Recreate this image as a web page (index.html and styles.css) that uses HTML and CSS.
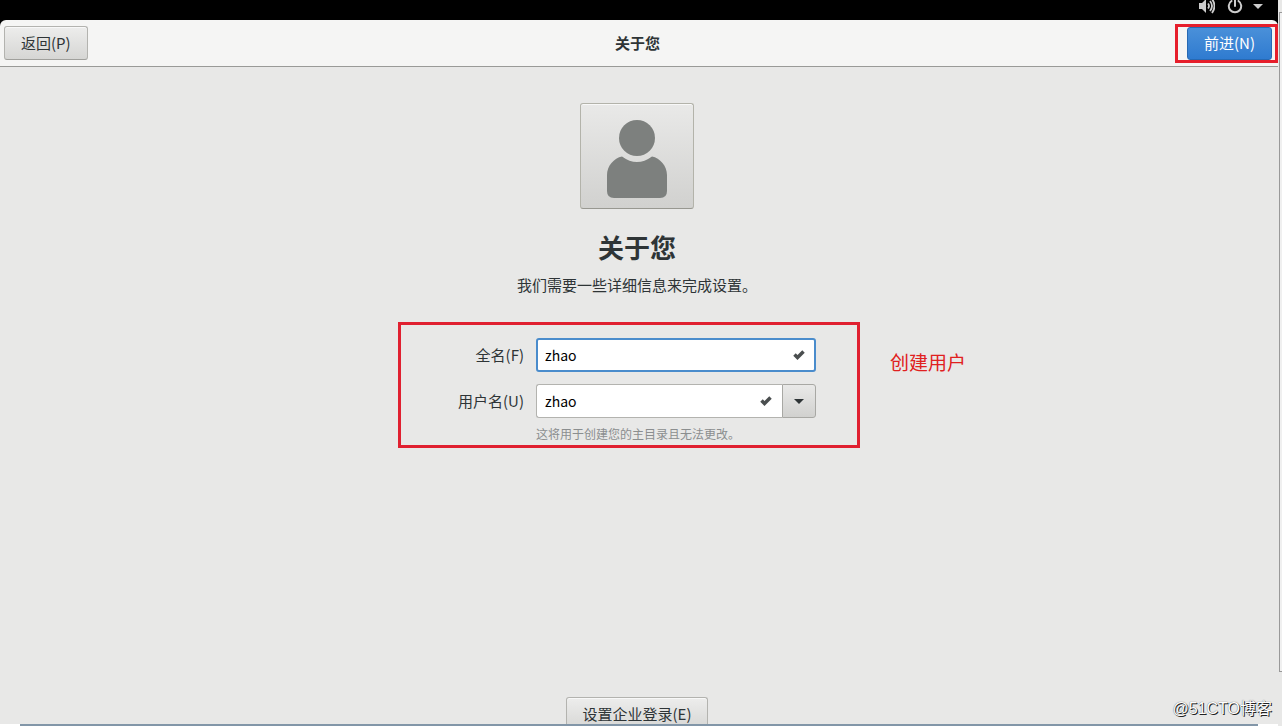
FILE: index.html
```html
<!DOCTYPE html>
<html lang="zh-CN">
<head>
  <meta charset="UTF-8">
  <meta name="viewport" content="width=device-width, initial-scale=1.0">
  <title>关于您</title>
  <link rel="stylesheet" href="styles.css">
</head>
<body>

<div class="screen">
  <div class="topbar">
    <svg class="volume" width="16" height="16" viewBox="0 0 16 16">
      <path d="M0 5h3l4-4v14l-4-4H0z" fill="#ccc"/>
      <path d="M9 5.500q2 2.500 0 5M11 3q4 5 0 10M13 1q5 7 0 14" fill="none" stroke="#ccc" stroke-width="1.800"/>
    </svg>
    <svg class="power" width="16" height="16" viewBox="0 0 16 16">
      <path d="M4.500 3a6.200 6.200 0 1 0 7 0M8 0v8" fill="none" stroke="#ccc" stroke-width="2" stroke-linecap="round"/>
    </svg>
    <svg class="caret" width="10" height="16" viewBox="0 0 10 16">
      <path d="M0 6h10l-5 5z" fill="#ccc"/>
    </svg>
  </div>

  <header class="header">
    <button class="btn" type="button">返回(P)</button>
    <h1 class="header-title">关于您</h1>
    <div class="next">
      <button class="btn btn-primary" type="button">前进(N)</button>
    </div>
  </header>

  <main class="page">
    <button class="avatar" type="button" aria-label="头像">
      <svg width="60" height="78" viewBox="0 0 60 78" fill="#7d807e">
        <circle cx="30" cy="18" r="18"/>
        <path d="M15 36.500Q30 47.500 45 36.500C53 38 60 46 60 55V71Q60 78 53 78H7Q0 78 0 71V55C0 46 7 38 15 36.500z"/>
      </svg>
    </button>
    <h2 class="title">关于您</h2>
    <p class="subtitle">我们需要一些详细信息来完成设置。</p>

    <form class="form">
      <label for="fullname">全名(F)</label>
      <div class="entry entry-focus">
        <input type="text" id="fullname" value="zhao">
        <svg class="check" width="12" height="10" viewBox="0 0 12 10">
          <path d="M1.500 4.500l3 3 6-6" fill="none" stroke="#4a4e4f" stroke-width="3.500"/>
        </svg>
      </div>

      <label for="username">用户名(U)</label>
      <div class="combo">
        <div class="entry">
          <input type="text" id="username" value="zhao">
          <svg class="check" width="12" height="10" viewBox="0 0 12 10">
            <path d="M1.500 4.500l3 3 6-6" fill="none" stroke="#4a4e4f" stroke-width="3.500"/>
          </svg>
        </div>
        <button class="combo-btn" type="button" aria-label="选择用户名">
          <svg width="10" height="5" viewBox="0 0 10 5"><path d="M0 0h10l-5 5z" fill="#2e3436"/></svg>
        </button>
      </div>

      <p class="hint">这将用于创建您的主目录且无法更改。</p>
      <div class="mark"></div>
      <span class="note">创建用户</span>
    </form>

    <button class="btn enterprise" type="button">设置企业登录(E)</button>
  </main>
  <div class="bottom-line"></div>
</div>
<div class="gutter"></div>
<div class="watermark">@51CTO博客</div>

</body>
</html>
```
FILE: styles.css
```css
* {
  box-sizing: border-box;
}

body {
  margin: 0;
  display: flex;
  height: 100vh;
  overflow: hidden;
  position: relative;
  font-family: "Noto Sans CJK SC", sans-serif;
  font-size: 15px;
  line-height: 22px;
  color: #2e3436;
  background-color: #e8e8e7;
}

button,
input {
  font: inherit;
  color: inherit;
}

.screen {
  flex: 1;
  min-width: 0;
  display: flex;
  flex-direction: column;
  background-color: #000;
}

.gutter {
  width: 3px;
  margin: 12px 0 54px 1px;
  border: 1px solid #999;
  border-right: none;
  background-color: #f0f0f0;
}

.topbar {
  height: 20px;
  flex: none;
  display: flex;
  justify-content: flex-end;
  align-items: flex-start;
  gap: 12px;
  padding-right: 15px;
}

.topbar svg {
  margin-top: -2px;
}

.topbar .caret {
  margin-left: -2px;
}

.header {
  flex: none;
  display: grid;
  grid-template-columns: 1fr auto 1fr;
  align-items: center;
  height: 47px;
  padding-left: 4px;
  background-color: #f5f5f4;
  border-bottom: 1px solid #999a97;
  border-radius: 6px 6px 0 0;
}

.header-title {
  margin: 0;
  padding-right: 7px;
  font-size: 15px;
  font-weight: bold;
}

.btn {
  justify-self: start;
  height: 34px;
  padding: 0 16px;
  white-space: nowrap;
  border: 1px solid #b3b3af;
  border-bottom-color: #a0a09c;
  border-radius: 3px;
  background-image: linear-gradient(#ededec, #d6d6d4);
  box-shadow: inset 0 1px #f8f8f8;
}

.btn-primary {
  height: 33px;
  color: #fff;
  border-color: #2769b3;
  background-image: linear-gradient(#4a90d9, #2f7bd0);
  box-shadow: none;
}

.next {
  justify-self: end;
  display: flex;
  padding: 0 3px 0 9px;
  border: 3px solid #e61e2b;
}

.page {
  flex: 1;
  min-height: 0;
  display: flex;
  flex-direction: column;
  align-items: center;
  padding: 36px 4px 0 0;
  background-color: #e8e8e7;
  overflow: hidden;
}

.avatar {
  flex: none;
  width: 114px;
  height: 106px;
  display: flex;
  justify-content: center;
  align-items: center;
  padding: 6px 0 0;
  border: 1px solid #b3b3aa;
  border-bottom-color: #989891;
  border-radius: 3px;
  background-image: linear-gradient(#e9e9e8, #d1d1cf);
  box-shadow: inset 0 1px #f8f8f8;
}

.title {
  margin: 19px 0 0;
  font-size: 26px;
  line-height: 38px;
}

.subtitle {
  margin: 8px 0 0;
}

.form {
  position: relative;
  display: grid;
  grid-template-columns: auto 280px;
  column-gap: 12px;
  row-gap: 12px;
  align-items: center;
  margin-top: 42px;
}

.form label {
  text-align: right;
}

.entry {
  flex: 1;
  display: flex;
  align-items: center;
  height: 34px;
  padding: 0 10px 0 8px;
  border: 1px solid #b3b3af;
  border-radius: 3px;
  background-color: #fff;
}

.entry input {
  flex: 1;
  min-width: 0;
  padding: 0;
  border: none;
  outline: none;
  background: none;
  font-size: 14px;
  color: #000;
}

.entry-focus {
  border: 2px solid #4a8ccc;
  padding: 0 9px 0 7px;
}

.combo {
  display: flex;
}

.combo .entry {
  border-right: none;
  border-radius: 3px 0 0 3px;
}

.combo-btn {
  width: 34px;
  display: flex;
  justify-content: center;
  align-items: center;
  padding: 0;
  border: 1px solid #a8a8a4;
  border-radius: 0 3px 3px 0;
  background-image: linear-gradient(#e9e9e8, #d1d1cf);
}

.hint {
  grid-column: 2;
  margin: -6px 0 0;
  font-size: 12px;
  line-height: 20px;
  color: #8b8e8f;
}

/* red annotations over the form */
.mark {
  position: absolute;
  top: -16px;
  right: -44px;
  bottom: -4px;
  left: -60px;
  border: 3px solid #e02030;
  pointer-events: none;
}

.note {
  position: absolute;
  top: 12px;
  left: 100%;
  margin-left: 74px;
  white-space: nowrap;
  font-size: 19px;
  line-height: 24px;
  color: #e02020;
}

.enterprise {
  flex: none;
  margin-top: auto;
  margin-bottom: -7px;
}

.bottom-line {
  flex: none;
  height: 2px;
  background-image: linear-gradient(to right, #fff 20px, #8296a8 20px, #8296a8 calc(100% - 20px), #fff calc(100% - 20px));
}

.watermark {
  position: absolute;
  right: 10px;
  bottom: 6px;
  font-family: "Liberation Sans", "Noto Sans CJK SC", sans-serif;
  font-size: 16px;
  color: #fff;
  text-shadow: 1px 1px 0 #222, 0 0 1px #444;
}
```
